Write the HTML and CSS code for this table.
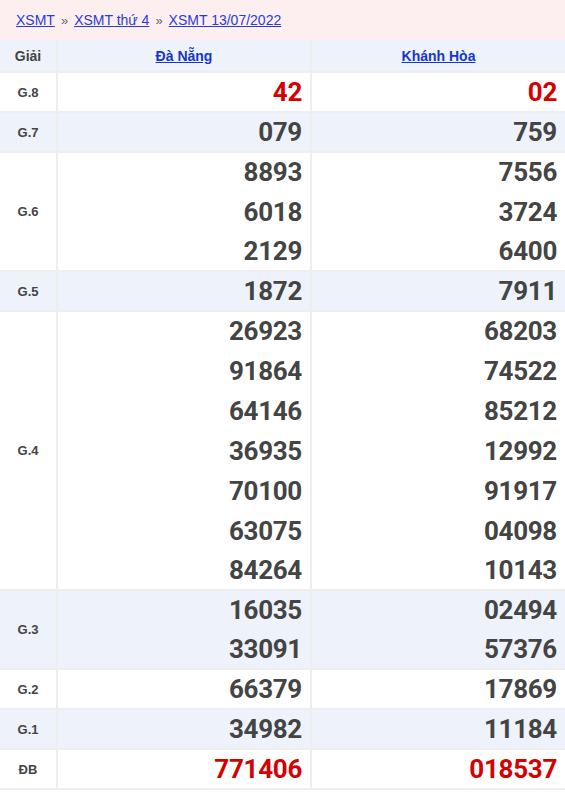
FILE: index.html
```html
<!DOCTYPE html>
<html lang="vi">
<head>
<meta charset="utf-8">
<link rel="stylesheet" href="styles.css">
</head>
<body>
<div class="crumbs">
  <a href="#">XSMT</a><span class="sep">»</span><a href="#">XSMT thứ 4</a><span class="sep">»</span><a href="#">XSMT 13/07/2022</a>
</div>
<table class="kq">
  <colgroup><col class="c0"><col><col></colgroup>
  <thead>
    <tr><th class="lbl">Giải</th><th><a href="#">Đà Nẵng</a></th><th><a href="#">Khánh Hòa</a></th></tr>
  </thead>
  <tbody>
    <tr><td class="lbl">G.8</td><td class="num red">42</td><td class="num red">02</td></tr>
    <tr class="alt"><td class="lbl">G.7</td><td class="num">079</td><td class="num">759</td></tr>
    <tr><td class="lbl">G.6</td><td class="num"><div>8893</div><div>6018</div><div>2129</div></td><td class="num"><div>7556</div><div>3724</div><div>6400</div></td></tr>
    <tr class="alt"><td class="lbl">G.5</td><td class="num">1872</td><td class="num">7911</td></tr>
    <tr><td class="lbl">G.4</td><td class="num"><div>26923</div><div>91864</div><div>64146</div><div>36935</div><div>70100</div><div>63075</div><div>84264</div></td><td class="num"><div>68203</div><div>74522</div><div>85212</div><div>12992</div><div>91917</div><div>04098</div><div>10143</div></td></tr>
    <tr class="alt"><td class="lbl">G.3</td><td class="num"><div>16035</div><div>33091</div></td><td class="num"><div>02494</div><div>57376</div></td></tr>
    <tr><td class="lbl">G.2</td><td class="num">66379</td><td class="num">17869</td></tr>
    <tr class="alt"><td class="lbl">G.1</td><td class="num">34982</td><td class="num">11184</td></tr>
    <tr><td class="lbl">ĐB</td><td class="num red">771406</td><td class="num red">018537</td></tr>
  </tbody>
</table>
</body>
</html>
```

FILE: styles.css
```css
html, body {
  margin: 0;
  padding: 0;
  background: #fff;
}
body {
  font-family: "Liberation Sans", Arial, sans-serif;
  color: #444;
}
.crumbs {
  background: #fdeff0;
  height: 40px;
  box-sizing: border-box;
  padding: 11px 16px 0;
  font-size: 14px;
  line-height: 18px;
}
.crumbs a {
  color: #2b3bd6;
  text-decoration: underline;
}
.crumbs .sep {
  color: #666;
  margin: 0 6px;
  font-size: 13px;
}
.kq {
  width: 565px;
  border-collapse: collapse;
  table-layout: fixed;
}
.kq col.c0 {
  width: 57px;
}
.kq th, .kq td {
  border: 2px solid #eeeeee;
  padding: 0;
}
.kq tr > :first-child { border-left: 0; }
.kq tr > :last-child { border-right: 0; }
.kq thead tr > * { border-top: 0; }
.kq thead tr {
  background: #eef2fa;
}
.kq th {
  height: 31px;
  font-size: 14px;
  font-weight: bold;
  text-align: center;
  vertical-align: middle;
}
.kq th a {
  color: #1536c8;
  text-decoration: underline;
}
.kq tr.alt {
  background: #eef2fa;
}
.kq td.lbl, .kq th.lbl {
  text-align: center;
  font-size: 13px;
  font-weight: bold;
  color: #444;
  vertical-align: middle;
}
.kq th.lbl { font-size: 14px; }
.kq td.num {
  font-family: Roboto, "Liberation Sans", sans-serif;
  font-weight: bold;
  font-size: 26px;
  letter-spacing: -0.3px;
  line-height: 38px;
  text-align: right;
  padding-right: 8px;
  color: #444;
  vertical-align: middle;
}
.kq td.num div {
  height: 40px;
  line-height: 40px;
}
.kq td.num div:first-child { margin-top: -1px; }
.kq td.num div:last-child { height: 38px; line-height: 38px; }
.kq td.red {
  color: #d50000;
}
```
